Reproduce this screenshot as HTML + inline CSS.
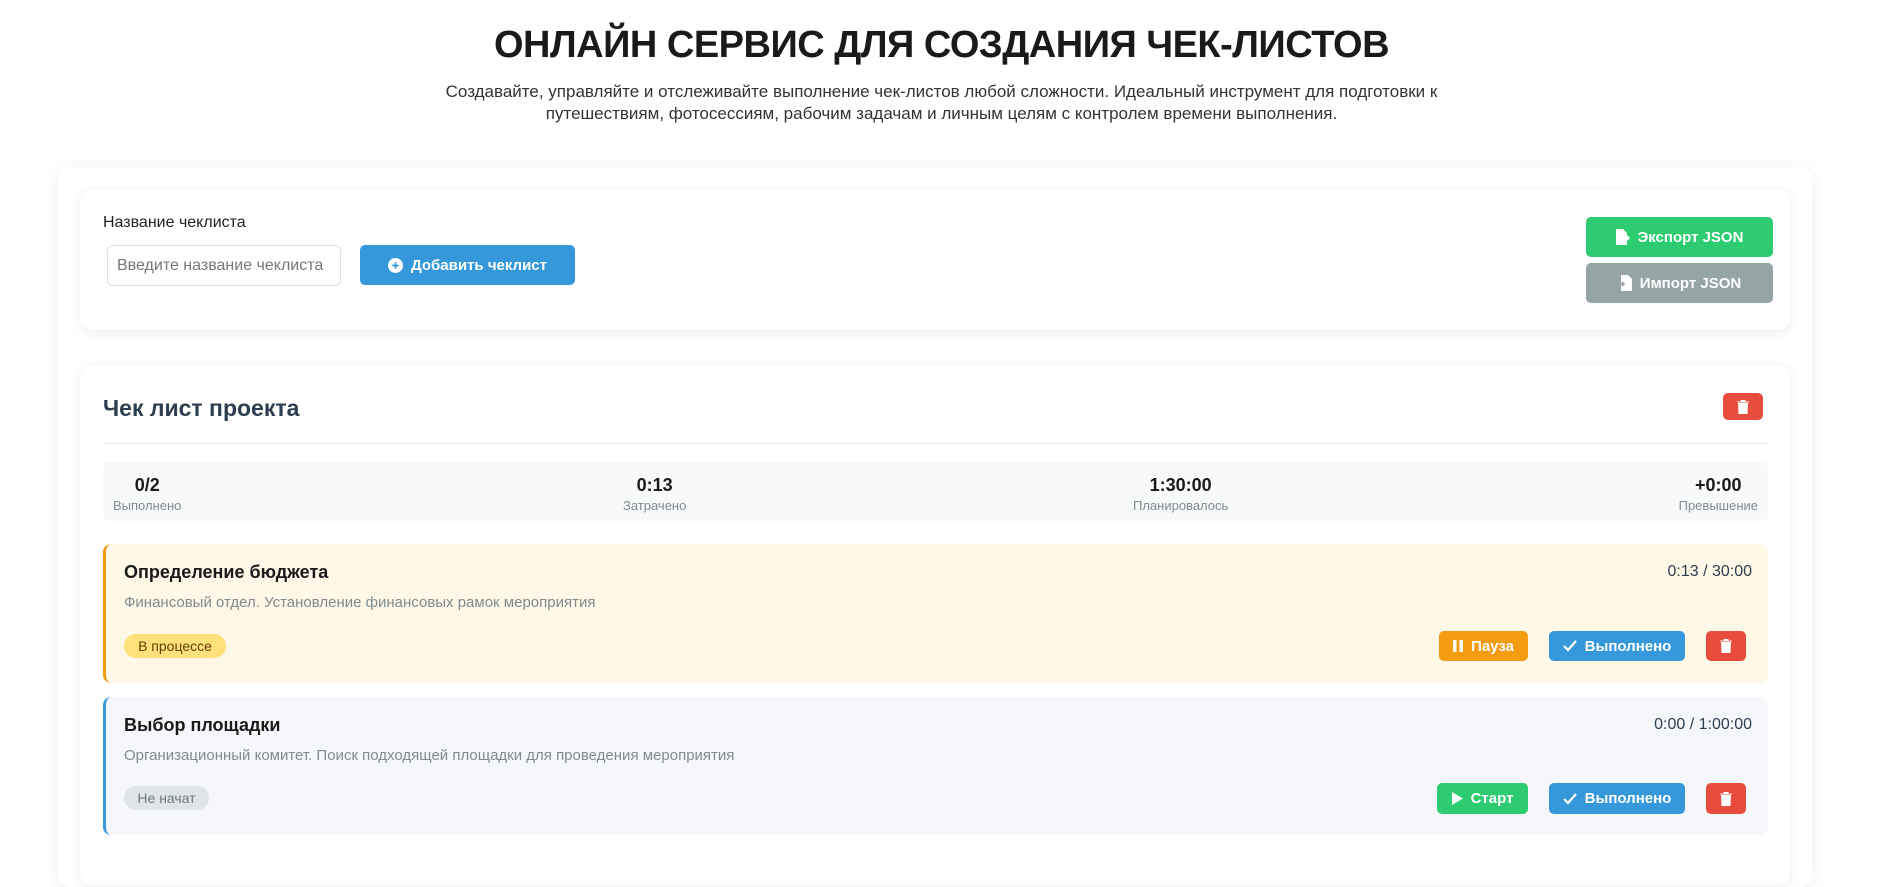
<!DOCTYPE html>
<html><head><meta charset="utf-8"><style>
*{box-sizing:border-box;margin:0;padding:0}
body{width:1883px;height:852px;overflow:hidden;background:#fff;font-family:"Liberation Sans",sans-serif;color:#2c3e50;position:relative}
.a{position:absolute}
h1{position:absolute;left:0;width:1883px;top:24px;text-align:center;font-size:38px;font-weight:bold;color:#1a1a1a;letter-spacing:-0.5px}
.sub{position:absolute;left:0;width:1883px;top:81px;text-align:center;font-size:17px;line-height:22px;color:#333}
.card{position:absolute;background:#fff;border-radius:12px;box-shadow:0 2px 12px rgba(0,0,0,.08)}
.btn{position:absolute;border-radius:5px;color:#fff;font-weight:bold;font-size:15px;display:flex;align-items:center;justify-content:center;gap:8px}
.task{position:absolute;left:103px;width:1665px;border-radius:8px}
.st{position:absolute;top:13px;text-align:center}
.st b{display:block;font-size:18px;color:#1a1a1a}
.st span{display:block;font-size:13px;color:#7f8c8d;margin-top:2px}
</style></head><body>
<h1>ОНЛАЙН СЕРВИС ДЛЯ СОЗДАНИЯ ЧЕК-ЛИСТОВ</h1>
<div class="sub">Создавайте, управляйте и отслеживайте выполнение чек-листов любой сложности. Идеальный инструмент для подготовки к<br>путешествиям, фотосессиям, рабочим задачам и личным целям с контролем времени выполнения.</div>

<div class="card" style="left:58px;top:167px;width:1754px;height:720px;box-shadow:0 2px 16px rgba(0,0,0,.07)"></div>

<div class="card" style="left:80px;top:190px;width:1710px;height:140px">
 <div class="a" style="left:23px;top:24px;font-size:16px;color:#222">Название чеклиста</div>
 <div class="a" style="left:27px;top:55px;width:234px;height:41px;border:1px solid #ddd;border-radius:6px;font-size:16px;color:#777;padding:11px 9px;white-space:nowrap;overflow:hidden">Введите название чеклиста</div>
 <div class="btn" style="left:280px;top:55px;width:215px;height:40px;background:#3498db"><svg width="15" height="15" viewBox="0 0 16 16"><circle cx="8" cy="8" r="8" fill="#fff"/><path d="M8 4.5v7M4.5 8h7" stroke="#3498db" stroke-width="1.8"/></svg>Добавить чеклист</div>
 <div class="btn" style="left:1506px;top:27px;width:187px;height:40px;background:#2ecc71"><svg width="14" height="16" viewBox="0 0 14 16"><path d="M0 0h7l4 4v12H0z" fill="#fff"/><path d="M8 9h5M11 7l2 2-2 2" stroke="#fff" stroke-width="1.6" fill="none"/></svg>Экспорт JSON</div>
 <div class="btn" style="left:1506px;top:73px;width:187px;height:40px;background:#95a5a6"><svg width="14" height="16" viewBox="0 0 14 16"><path d="M3 0h7l4 4v12H3z" fill="#fff"/><path d="M0 9h6M4 7l2 2-2 2" stroke="#95a5a6" stroke-width="1.6" fill="none"/></svg>Импорт JSON</div>
</div>

<div class="card" style="left:80px;top:365px;width:1710px;height:520px">
 <div class="a" style="left:23px;top:30px;font-size:23px;font-weight:bold;color:#2c3e50">Чек лист проекта</div>
 <div class="btn" style="left:1643px;top:28px;width:40px;height:27px;background:#e74c3c"><svg width="12" height="14" viewBox="0 0 12 14"><path d="M0 2h12M4 2V0.5h4V2M1.5 3.5h9L10 14H2z" fill="#fff" stroke="#fff" stroke-width="1"/></svg></div>
 <div class="a" style="left:23px;top:78px;width:1665px;height:1px;background:#e6e9ec"></div>
 <div class="a" style="left:23px;top:97px;width:1665px;height:59px;background:#f8f9fa;border-radius:6px">
  <div class="st" style="left:10px"><b>0/2</b><span>Выполнено</span></div>
  <div class="st" style="left:520px"><b>0:13</b><span>Затрачено</span></div>
  <div class="st" style="left:1030px"><b>1:30:00</b><span>Планировалось</span></div>
  <div class="st" style="right:10px"><b>+0:00</b><span>Превышение</span></div>
 </div>
</div>

<div class="task" style="top:544px;height:139px;background:#fff8e6;border-left:3px solid #f39c12">
 <div class="a" style="left:18px;top:18px;font-size:18px;font-weight:bold;color:#1a1a1a">Определение бюджета</div>
 <div class="a" style="right:16px;top:19px;font-size:16px;color:#2c3e50">0:13 / 30:00</div>
 <div class="a" style="left:18px;top:50px;font-size:15px;color:#7f8c8d">Финансовый отдел. Установление финансовых рамок мероприятия</div>
 <div class="a" style="left:18px;top:90px;width:102px;height:24px;border-radius:12px;background:#ffe07a;font-size:14px;color:#5a4500;text-align:center;line-height:24px">В процессе</div>
 <div class="btn" style="left:1333px;top:87px;width:89px;height:30px;background:#f39c12"><svg width="10" height="12"><rect x="0" y="0" width="3.5" height="12" fill="#fff"/><rect x="6.5" y="0" width="3.5" height="12" fill="#fff"/></svg>Пауза</div>
 <div class="btn" style="left:1443px;top:87px;width:136px;height:30px;background:#3498db"><svg width="14" height="12"><path d="M1 6l4 4 8-9" stroke="#fff" stroke-width="2.2" fill="none"/></svg>Выполнено</div>
 <div class="btn" style="left:1600px;top:87px;width:40px;height:30px;background:#e74c3c"><svg width="12" height="14" viewBox="0 0 12 14"><path d="M0 2h12M4 2V0.5h4V2M1.5 3.5h9L10 14H2z" fill="#fff" stroke="#fff" stroke-width="1"/></svg></div>
</div>

<div class="task" style="top:697px;height:138px;background:#f5f7fa;border-left:3px solid #3498db">
 <div class="a" style="left:18px;top:18px;font-size:18px;font-weight:bold;color:#1a1a1a">Выбор площадки</div>
 <div class="a" style="right:16px;top:19px;font-size:16px;color:#2c3e50">0:00 / 1:00:00</div>
 <div class="a" style="left:18px;top:50px;font-size:15px;color:#7f8c8d">Организационный комитет. Поиск подходящей площадки для проведения мероприятия</div>
 <div class="a" style="left:18px;top:89px;width:85px;height:24px;border-radius:12px;background:#dfe4e6;font-size:14px;color:#6c7a7d;text-align:center;line-height:24px">Не начат</div>
 <div class="btn" style="left:1331px;top:86px;width:91px;height:31px;background:#2ecc71"><svg width="11" height="13"><path d="M0 0l11 6.5L0 13z" fill="#fff"/></svg>Старт</div>
 <div class="btn" style="left:1443px;top:86px;width:136px;height:31px;background:#3498db"><svg width="14" height="12"><path d="M1 6l4 4 8-9" stroke="#fff" stroke-width="2.2" fill="none"/></svg>Выполнено</div>
 <div class="btn" style="left:1600px;top:86px;width:40px;height:31px;background:#e74c3c"><svg width="12" height="14" viewBox="0 0 12 14"><path d="M0 2h12M4 2V0.5h4V2M1.5 3.5h9L10 14H2z" fill="#fff" stroke="#fff" stroke-width="1"/></svg></div>
</div>
</body></html>
